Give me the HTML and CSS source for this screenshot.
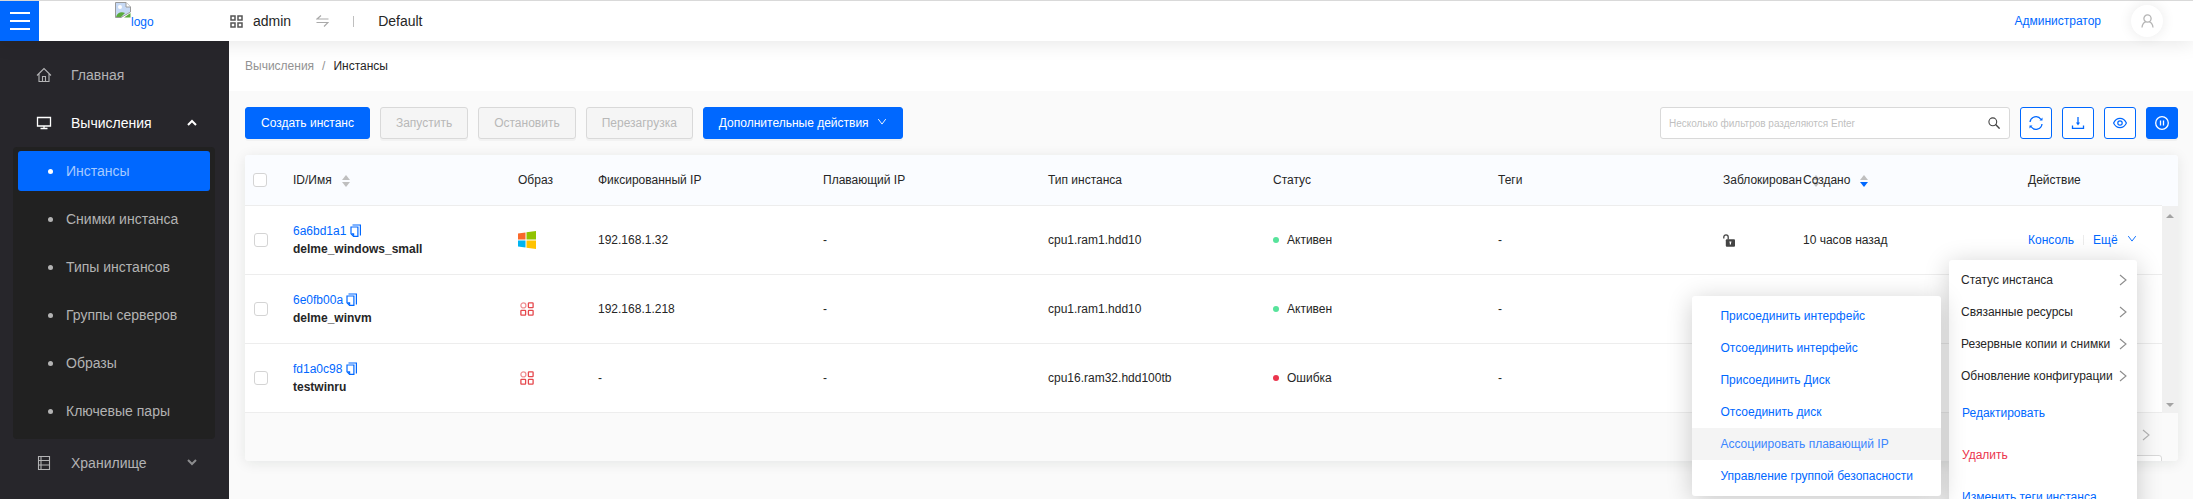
FILE: index.html
```html
<!DOCTYPE html>
<html lang="ru">
<head>
<meta charset="utf-8">
<title>Инстансы</title>
<link rel="stylesheet" href="styles.css">
</head>
<body>
<svg class="sprite" aria-hidden="true">
  <symbol id="i-copy" viewBox="0 0 11 13"><path d="M2.500 1h7.900v10.500" fill="none" stroke="currentColor" stroke-width="1.200"/><path d="M1 3h6.900v9.400H3.600L1 9.800z" fill="none" stroke="currentColor" stroke-width="1.200"/><path d="M1 9.200h3.200v3.200z" fill="currentColor"/></symbol>
  <symbol id="i-down" viewBox="0 0 12 12"><path d="M1.500 2.500 6 8.500l4.500-6" fill="none" stroke="currentColor" stroke-width="1.100"/></symbol>
  <symbol id="i-right" viewBox="0 0 8 12"><path d="M1 1l6 5-6 5" fill="none" stroke="currentColor" stroke-width="1.100"/></symbol>
  <symbol id="i-grid" viewBox="0 0 14 14"><g fill="none" stroke="currentColor" stroke-width="1.300"><circle cx="3.400" cy="3.400" r="2.500" opacity=".6"/><rect x="8.400" y=".9" width="4.700" height="4.700" rx=".6"/><rect x=".9" y="8.400" width="4.700" height="4.700" rx=".6"/><rect x="8.400" y="8.400" width="4.700" height="4.700" rx=".6"/></g></symbol>
</svg>

<header class="topbar">
  <button class="burger" aria-label="Меню"><svg width="20" height="18"><path d="M0 1h20M0 9h20M0 17h20" stroke="#fff" stroke-width="2"/></svg></button>
  <a class="logo" href="#"><svg width="16" height="16" viewBox="0 0 16 16"><path d="M.5.500H11L15.500 5v5L6 15.500H.5z" fill="#c6d9f5" stroke="#9a9a9a"/><path d="M11 .5V5h4.500" fill="#fff" stroke="#9a9a9a"/><circle cx="5" cy="5" r="2" fill="#fff"/><path d="M1 15c1-4 5-6 9-4l-4 4z" fill="#5aab3c"/><path d="M15.500 11v4.500H9z" fill="#5aab3c"/></svg><span>logo</span></a>
  <div class="project">
    <svg width="13" height="13" viewBox="0 0 13 13"><g fill="none" stroke="#555" stroke-width="1.500"><rect x="1" y="1" width="4" height="4"/><rect x="8" y="1" width="4" height="4"/><rect x="1" y="8" width="4" height="4"/><rect x="8" y="8" width="4" height="4"/></g></svg>
    <span class="project-name">admin</span>
    <svg class="swap" width="13" height="12" viewBox="0 0 13 12"><path d="M12.500 4H1l4-3.500M.5 7.500H12L8 11.500" fill="none" stroke="#aaa" stroke-width="1.200"/></svg>
    <i class="bar"></i>
    <span>Default</span>
  </div>
  <a class="user" href="#">Администратор</a>
  <button class="avatar" aria-label="Профиль"><svg width="13" height="14" viewBox="0 0 13 14"><g fill="none" stroke="#b5b5b5" stroke-width="1.300"><circle cx="6.500" cy="4.500" r="3.600"/><path d="M1 13.500c.3-3.500 2-5 3.800-5.800M12 13.500c-.3-3.500-2-5-3.800-5.800"/></g></svg></button>
</header>

<div class="shell">
  <nav class="side">
    <a class="nav" href="#"><svg width="16" height="16" viewBox="0 0 16 16"><path d="M1 8.500 8 1.500l7 7M3 7v7.500h10V7M6.500 14.500V9.500h3v5" fill="none" stroke="currentColor" stroke-width="1.100"/></svg><span>Главная</span></a>
    <a class="nav open" href="#"><svg width="16" height="16" viewBox="0 0 16 16"><path d="M1.500 2.500h13v8.500h-13zM8 11v2.500M4.500 13.500h7" fill="none" stroke="currentColor" stroke-width="1.300"/></svg><span>Вычисления</span><svg class="arrow" width="10" height="8"><path d="M1 6l4-4 4 4" fill="none" stroke="currentColor" stroke-width="2"/></svg></a>
    <ul class="sub">
      <li><a class="on" href="#">Инстансы</a></li>
      <li><a href="#">Снимки инстанса</a></li>
      <li><a href="#">Типы инстансов</a></li>
      <li><a href="#">Группы серверов</a></li>
      <li><a href="#">Образы</a></li>
      <li><a href="#">Ключевые пары</a></li>
    </ul>
    <a class="nav" href="#"><svg width="16" height="16" viewBox="0 0 16 16"><path d="M2.500 1.500h11v13h-11zM5 1.500v13M2.500 5.500h11M2.500 10h11" fill="none" stroke="currentColor" stroke-width="1.100"/></svg><span>Хранилище</span><svg class="arrow dim" width="10" height="8"><path d="M1 1l4 4 4-4" fill="none" stroke="currentColor" stroke-width="2"/></svg></a>
  </nav>

  <main class="main">
    <div class="crumbs"><a href="#">Вычисления</a><i>/</i><span>Инстансы</span></div>
    <div class="content">
      <div class="tools">
        <button class="btn primary">Создать инстанс</button>
        <button class="btn" disabled>Запустить</button>
        <button class="btn" disabled>Остановить</button>
        <button class="btn" disabled>Перезагрузка</button>
        <button class="btn primary">Дополнительные действия<svg width="10" height="10"><use href="#i-down"/></svg></button>
        <label class="search"><input type="text" placeholder="Несколько фильтров разделяются Enter" aria-label="Фильтр"><svg width="12" height="12" viewBox="0 0 12 12"><circle cx="4.800" cy="4.800" r="3.900" fill="none" stroke="#444" stroke-width="1.100"/><path d="M7.600 7.600l4 4" stroke="#444" stroke-width="1.400"/></svg></label>
        <button class="ibtn" aria-label="Обновить"><svg width="14" height="14" viewBox="0 0 14 14"><path d="M1 6a6 6 0 0 1 11-2.500M13 8a6 6 0 0 1-11 2.500" fill="none" stroke="currentColor" stroke-width="1.300"/><path d="M13.500 1.500v3h-3zM.5 12.500v-3h3z" fill="currentColor"/></svg></button>
        <button class="ibtn" aria-label="Скачать"><svg width="14" height="14" viewBox="0 0 14 14"><path d="M7 1v7M1.500 9.500V12.400h11V9.500" fill="none" stroke="currentColor" stroke-width="1.300"/><path d="M5 6.500h4L7 9.500z" fill="currentColor"/></svg></button>
        <button class="ibtn" aria-label="Столбцы"><svg width="14" height="14" viewBox="0 0 14 14"><path d="M.6 7C3.500.8 10.500.8 13.400 7 10.500 13.200 3.500 13.200.6 7z" fill="none" stroke="currentColor" stroke-width="1.200"/><circle cx="7" cy="7" r="2.200" fill="none" stroke="currentColor" stroke-width="1.200"/></svg></button>
        <button class="ibtn fill" aria-label="Пауза"><svg width="14" height="14" viewBox="0 0 14 14"><circle cx="7" cy="7" r="6.300" fill="none" stroke="currentColor" stroke-width="1.300"/><path d="M5.500 4.500v5M8.500 4.500v5" stroke="currentColor" stroke-width="1.300"/></svg></button>
      </div>

      <section class="card">
        <div class="scrollarea">
        <table>
          <colgroup><col class="c-check"><col class="c-wide"><col class="c-small"><col class="c-wide"><col class="c-wide"><col class="c-wide"><col class="c-wide"><col class="c-wide"><col class="c-small"><col class="c-wide"><col></colgroup>
          <thead><tr>
            <th><input type="checkbox" aria-label="Выбрать все"></th>
            <th>ID/Имя<span class="sort"></span></th><th>Образ</th><th>Фиксированный IP</th><th>Плавающий IP</th><th>Тип инстанса</th><th>Статус</th><th>Теги</th>
            <th>Заблокирован<span class="sort"></span></th><th>Создано<span class="sort desc"></span></th><th>Действие</th>
          </tr></thead>
          <tbody>
            <tr>
              <td><input type="checkbox" aria-label="delme_windows_small"></td>
              <td><a href="#">6a6bd1a1 <svg width="11" height="13"><use href="#i-copy"/></svg></a><b>delme_windows_small</b></td>
              <td><svg class="os" width="18" height="18" viewBox="0 0 18 18"><path d="M0 2.500 7.500 1.500v7H0z" fill="#f9682a"/><path d="M8.500 1.300 18 0v8.500H8.500z" fill="#91c300"/><path d="M0 9.500h7.500v7L0 15.500z" fill="#00b4f1"/><path d="M8.500 9.500H18V18l-9.500-1.300z" fill="#ffc300"/></svg></td>
              <td>192.168.1.32</td><td>-</td><td>cpu1.ram1.hdd10</td><td><i class="dot"></i>Активен</td><td>-</td>
              <td><svg class="lock" width="12" height="13" viewBox="0 0 12 13"><path d="M.8 4.500V3a2.200 2.200 0 0 1 4.400 0v2.500" fill="none" stroke="#444" stroke-width="1.300"/><rect x="2.800" y="5.300" width="9.200" height="7.500" rx="1" fill="#444"/><path d="M7.400 7.500v3M6.400 8h2" stroke="#fff" stroke-width="1.200"/></svg></td>
              <td>10 часов назад</td>
              <td><div class="acts"><a href="#">Консоль</a><i class="sep"></i><a href="#">Ещё <svg width="10" height="10"><use href="#i-down"/></svg></a></div></td>
            </tr>
            <tr>
              <td><input type="checkbox" aria-label="delme_winvm"></td>
              <td><a href="#">6e0fb00a <svg width="11" height="13"><use href="#i-copy"/></svg></a><b>delme_winvm</b></td>
              <td><svg class="img" width="18" height="14"><use href="#i-grid"/></svg></td>
              <td>192.168.1.218</td><td>-</td><td>cpu1.ram1.hdd10</td><td><i class="dot"></i>Активен</td><td>-</td><td></td><td></td><td></td>
            </tr>
            <tr>
              <td><input type="checkbox" aria-label="testwinru"></td>
              <td><a href="#">fd1a0c98 <svg width="11" height="13"><use href="#i-copy"/></svg></a><b>testwinru</b></td>
              <td><svg class="img" width="18" height="14"><use href="#i-grid"/></svg></td>
              <td>-</td><td>-</td><td>cpu16.ram32.hdd100tb</td><td><i class="dot err"></i>Ошибка</td><td>-</td><td></td><td></td><td></td>
            </tr>
          </tbody>
        </table>
        <div class="gutter"><div class="track"><i class="up"></i><i class="dn"></i></div></div>
        </div>
        <div class="pager"><button aria-label="Следующая"><svg width="8" height="12"><use href="#i-right"/></svg></button><div class="size"></div></div>
      </section>
    </div>
  </main>
</div>

<div class="menu more">
  <button class="group">Статус инстанса<svg width="8" height="12"><use href="#i-right"/></svg></button>
  <button class="group">Связанные ресурсы<svg width="8" height="12"><use href="#i-right"/></svg></button>
  <button class="group">Резервные копии и снимки<svg width="8" height="12"><use href="#i-right"/></svg></button>
  <button class="group">Обновление конфигурации<svg width="8" height="12"><use href="#i-right"/></svg></button>
  <button class="act">Редактировать</button>
  <button class="act danger">Удалить</button>
  <button class="act">Изменить теги инстанса</button>
</div>
<div class="menu submenu">
  <button>Присоединить интерфейс</button>
  <button>Отсоединить интерфейс</button>
  <button>Присоединить Диск</button>
  <button>Отсоединить диск</button>
  <button class="hover">Ассоциировать плавающий IP</button>
  <button>Управление группой безопасности</button>
</div>
</body>
</html>
```
FILE: styles.css
```css
* { box-sizing: border-box; }
html, body { height: 100%; }
body {
  margin: 0;
  display: flex;
  flex-direction: column;
  position: relative;
  overflow: hidden;
  background: #fafafa;
  color: #262626;
  font: 12px/18px "Liberation Sans", Arial, sans-serif;
}
a { color: #0068ff; text-decoration: none; }
button { font: inherit; border: 0; padding: 0; background: none; cursor: pointer; }
i { font-style: normal; }
.sprite { position: absolute; width: 0; height: 0; }

.topbar {
  flex: none;
  display: flex;
  align-items: center;
  height: 41px;
  border-top: 1px solid #d9d9d9;
  background: #fff;
  box-shadow: 0 2px 20px rgba(0, 0, 0, .1);
  position: relative;
  z-index: 2;
}
.burger { width: 39px; height: 40px; background: #0068ff; display: grid; place-items: center; }
.logo { display: flex; align-items: flex-start; width: 190px; padding-left: 76px; height: 38px; }
.logo span { padding-top: 11px; }
.project { display: flex; align-items: center; font-size: 14px; padding-left: 1px; }
.project-name { padding-left: 10px; }
.swap { margin-left: 25px; }
.bar { width: 1px; height: 11px; background: #bfbfbf; margin: 0 24px; }
.user { margin-left: auto; }
.avatar {
  width: 32px;
  height: 32px;
  margin: 0 30px;
  border-radius: 50%;
  background: #fff;
  box-shadow: 0 0 14px rgba(0, 0, 0, .09);
  display: grid;
  place-items: center;
}

.shell { flex: 1; display: flex; min-height: 0; }
.side { flex: none; width: 229px; background: #27262b; padding-top: 10px; font-size: 14px; overflow: hidden; }
.nav { display: flex; align-items: center; height: 48px; padding: 0 32px 0 36px; color: #b3b3b5; }
.nav span { padding-left: 19px; }
.nav.open { color: #fff; }
.nav .arrow { margin-left: auto; }
.nav .dim { color: #8c8c8e; }
.sub { list-style: none; margin: 0 14px 0 13px; padding: 4px 5px; background: #212121; border-radius: 4px; }
.sub li { height: 48px; padding: 4px 0; }
.sub li:first-child { padding-top: 0; height: 44px; }
.sub a { display: flex; align-items: center; height: 40px; padding-left: 30px; border-radius: 3px; color: #b3b3b3; }
.sub a::before { content: ""; width: 5px; height: 5px; margin-right: 13px; border-radius: 50%; background: currentColor; }
.sub a.on { background: #0068ff; color: #a6caff; }
.sub a.on::before { background: #fff; }

.main { flex: 1; min-width: 0; }
.crumbs { height: 50px; padding: 16px; background: #fff; display: flex; }
.crumbs a { color: #929292; }
.crumbs i { margin: 0 8px; color: #929292; }
.content { padding: 16px 15px 16px 16px; }

.tools { display: flex; gap: 10px; margin-bottom: 16px; }
.btn {
  height: 32px;
  padding: 0 15px;
  border: 1px solid #d9d9d9;
  border-radius: 3px;
  background: #f5f5f5;
  color: #b8b8b8;
  box-shadow: 0 2px 0 rgba(0, 0, 0, .03);
}
.btn.primary { background: #0068ff; border-color: #0068ff; color: #fff; font-weight: 500; }
.btn svg { margin-left: 8px; }
.search {
  margin-left: auto;
  width: 350px;
  height: 32px;
  padding: 0 9px 0 8px;
  display: flex;
  align-items: center;
  border: 1px solid #d9d9d9;
  border-radius: 3px;
  background: #fff;
}
.search input { flex: 1; border: 0; outline: 0; padding: 0; font: 10px "Liberation Sans", Arial, sans-serif; background: none; }
.search input::placeholder { color: #bfbfbf; }
.ibtn { width: 32px; height: 32px; border: 1px solid #0068ff; border-radius: 3px; background: #fff; color: #0068ff; display: grid; place-items: center; }
.ibtn.fill { background: #0068ff; color: #fff; box-shadow: 0 2px 0 rgba(0, 0, 0, .04); }

.card { border-radius: 4px; overflow: hidden; box-shadow: 0 2px 14px rgba(0, 30, 20, .09); }
.scrollarea { display: grid; grid-template-columns: minmax(0, 1fr) 16px; background: #fff; }
table { width: 100%; table-layout: fixed; border-collapse: separate; border-spacing: 0; }
.c-check { width: 40px; }
.c-small { width: 80px; }
.c-wide { width: 225px; }
th, td { padding: 0 8px; text-align: left; border-bottom: 1px solid #ededed; white-space: nowrap; }
th { height: 51px; background: #fafcff; font-weight: 400; }
td { height: 69px; }
td b { display: block; }
td a svg { vertical-align: -2px; }
th input, td input {
  appearance: none;
  display: block;
  width: 14px;
  height: 14px;
  margin: 0;
  border: 1px solid #d4d4d4;
  border-radius: 3px;
  background: #fff;
}
td input { margin-left: 1px; }
.sort { display: inline-flex; flex-direction: column; gap: 2px; margin-left: 10px; vertical-align: middle; }
.sort::before, .sort::after { content: ""; width: 0; height: 0; border: 4px solid transparent; }
.sort::before { border-top: 0; border-bottom: 5px solid #bfbfbf; }
.sort::after { border-bottom: 0; border-top: 5px solid #bfbfbf; }
.sort.desc::after { border-top-color: #0068ff; }
.os, .img, .lock { display: block; }
.img { color: #e5484d; }
.dot { display: inline-block; width: 6px; height: 6px; margin: 0 8px 1px 0; border-radius: 50%; background: #57e39b; }
.dot.err { background: #eb354d; }
.acts { display: flex; align-items: center; }
.sep { width: 1px; height: 10px; margin: 0 9px; background: #ececec; }
.acts svg { margin-left: 6px; vertical-align: 0; }
.gutter { background: #fafcff; padding-top: 51px; display: flex; }
.track { flex: 1; background: #f0f0f0; display: flex; flex-direction: column; justify-content: space-between; align-items: center; padding: 8px 0 6px; }
.up { border: 4px solid transparent; border-top: 0; border-bottom-color: #a3a3a3; }
.dn { border: 4px solid transparent; border-bottom: 0; border-top-color: #a3a3a3; }
.pager { height: 48px; background: #fafafa; position: relative; display: flex; justify-content: flex-end; padding: 0 16px; overflow: hidden; }
.pager button { width: 32px; height: 48px; color: #b5b5b5; }
.size { position: absolute; right: 16px; top: 42px; width: 90px; height: 32px; border: 1px solid #d9d9d9; border-radius: 3px; background: #fff; }

.menu { position: absolute; z-index: 5; background: #fff; border-radius: 3px; padding: 4px 0; box-shadow: 0 4px 26px rgba(0, 0, 0, .2); }
.menu button { display: flex; align-items: center; width: 100%; height: 32px; color: #0068ff; white-space: nowrap; }
.more { top: 260px; right: 56px; width: 188px; }
.menu .group { color: #262626; padding: 0 10px 0 12px; justify-content: space-between; }
.menu .group svg { color: #8c8c8c; }
.menu .act { height: 42px; padding-left: 13px; }
.menu .danger { color: #eb354d; }
.submenu { top: 296px; right: 252px; }
.submenu button { padding: 0 28px; }
.submenu .hover { background: #f4f4f4; color: #3a86ff; }
```
